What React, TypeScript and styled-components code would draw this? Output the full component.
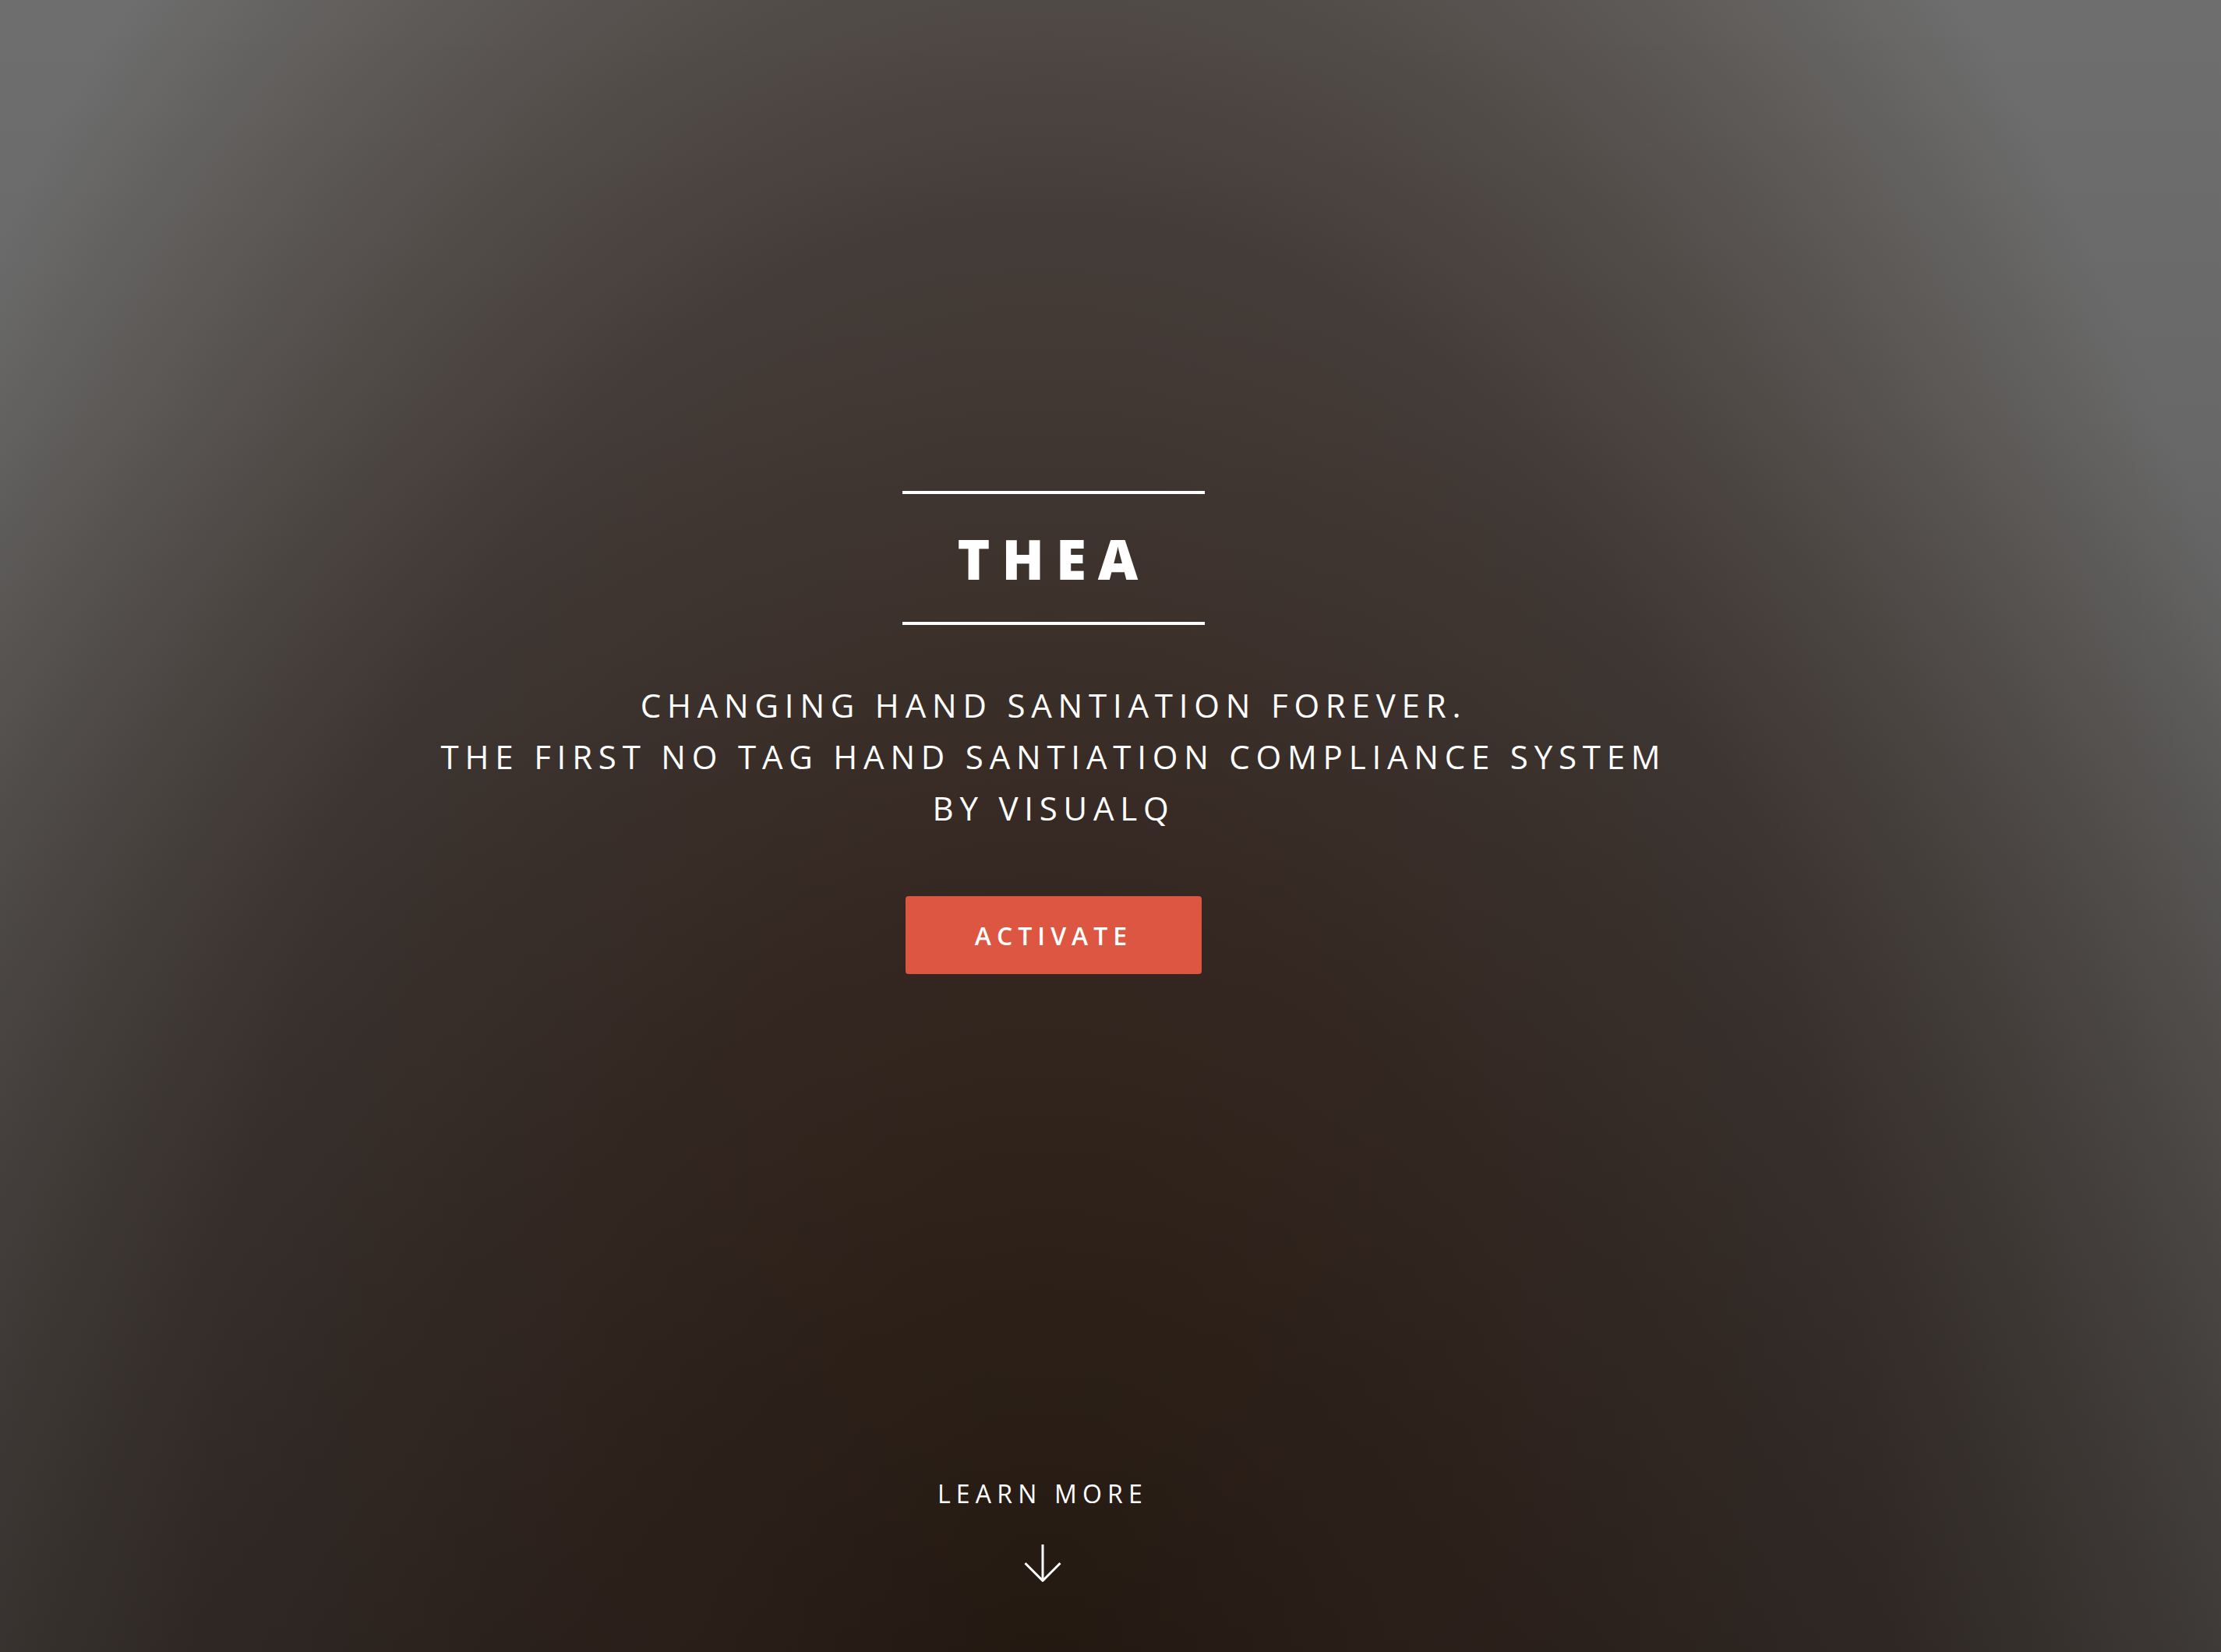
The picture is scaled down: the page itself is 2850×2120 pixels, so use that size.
import styled, { createGlobalStyle } from "styled-components";

const GlobalStyle = createGlobalStyle`
  html, body {
    margin: 0;
    padding: 0;
    background: #2a1f18;
  }
  * {
    box-sizing: border-box;
  }
`;

const Hero = styled.section`
  height: 100vh;
  min-height: 2120px;
  display: flex;
  flex-direction: column;
  align-items: center;
  padding: 630px 146px 90px 0;
  font-family: "Open Sans", "Noto Sans", sans-serif;
  color: #fff;
  background:
    linear-gradient(180deg, rgba(10, 5, 2, 0) 0%, rgba(10, 5, 2, 0.05) 25%, rgba(10, 5, 2, 0.2) 55%, rgba(10, 5, 2, 0.4) 100%),
    radial-gradient(ellipse 60% 138% at 47% 100%, #36271c 0%, #40312a 35%, #463e3a 63%, #5c5855 84%, #6e6e6e 100%);
`;

const TitleBlock = styled.div`
  width: 388px;
  border-top: 4px solid #fff;
  border-bottom: 4px solid #fff;
  padding: 34px 0 33px;
  text-align: center;
`;

const Title = styled.h1`
  margin: 0;
  font-size: 71px;
  font-weight: 800;
  line-height: normal;
  letter-spacing: 15px;
`;

const Tagline = styled.p`
  margin: 70px 0 0;
  font-size: 42px;
  font-weight: 400;
  line-height: 66px;
  letter-spacing: 7.8px;
  text-align: center;
  text-transform: uppercase;
`;

const Button = styled.button`
  margin-top: 80px;
  width: 380px;
  height: 100px;
  border: 0;
  border-radius: 4px;
  background: #dc5641;
  color: #fff;
  font-family: "Open Sans", "Noto Sans", sans-serif;
  font-size: 32px;
  font-weight: 600;
  letter-spacing: 7px;
  padding: 0;
  cursor: pointer;
`;

const LearnMore = styled.a`
  margin-top: auto;
  margin-right: 28px;
  display: flex;
  flex-direction: column;
  align-items: center;
  gap: 45px;
  color: #fff;
  text-decoration: none;
`;

const LearnLabel = styled.span`
  font-size: 32px;
  font-weight: 400;
  line-height: 40px;
  letter-spacing: 7.2px;
`;

const ArrowDown = () => (
  <svg width="48" height="48" viewBox="0 0 48 48" fill="none" stroke="#fff" strokeWidth="3">
    <line x1="24" y1="0" x2="24" y2="46" />
    <polyline points="1.5,24 24,46.5 46.5,24" strokeLinejoin="miter" />
  </svg>
);

export default function App() {
  return (
    <>
      <GlobalStyle />
      <Hero>
        <TitleBlock>
          <Title>THEA</Title>
        </TitleBlock>
        <Tagline>
          Changing hand santiation forever.
          <br />
          The first no tag hand santiation compliance system
          <br />
          by VisualQ
        </Tagline>
        <Button>ACTIVATE</Button>
        <LearnMore href="#">
          <LearnLabel>LEARN MORE</LearnLabel>
          <ArrowDown />
        </LearnMore>
      </Hero>
    </>
  );
}
